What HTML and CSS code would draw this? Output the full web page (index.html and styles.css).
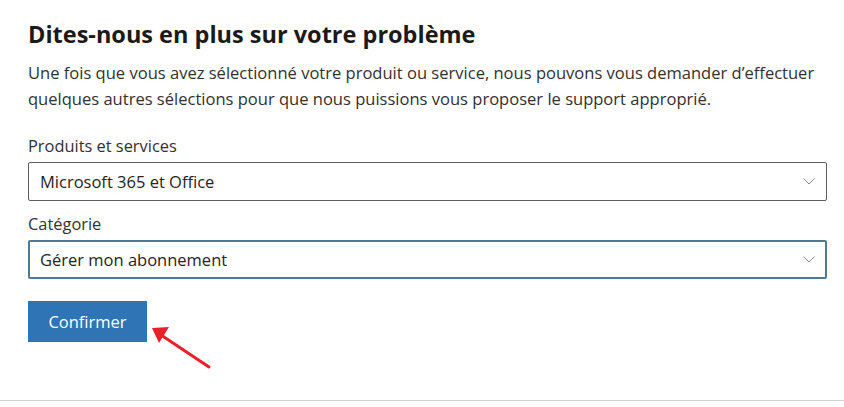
FILE: index.html
```html
<!DOCTYPE html>
<html lang="fr">
<head>
<meta charset="utf-8">
<title>Dites-nous en plus sur votre problème</title>
<link rel="stylesheet" href="styles.css">
</head>
<body>
<div class="page">
  <div class="content">
    <h1 class="title">Dites-nous en plus sur votre problème</h1>
    <p class="intro">Une fois que vous avez sélectionné votre produit ou service, nous pouvons vous demander d’effectuer quelques autres sélections pour que nous puissions vous proposer le support approprié.</p>
    <div class="field first">
      <label class="label">Produits et services</label>
      <div class="select">
        <span class="value">Microsoft 365 et Office</span>
        <svg class="chev" width="12" height="7" viewBox="0 0 12 7"><polyline points="0.5,0.5 6,6 11.5,0.5" fill="none" stroke="#8a8886" stroke-width="1"/></svg>
      </div>
    </div>
    <div class="field">
      <label class="label">Catégorie</label>
      <div class="select focused">
        <span class="value">Gérer mon abonnement</span>
        <svg class="chev" width="12" height="7" viewBox="0 0 12 7"><polyline points="0.5,0.5 6,6 11.5,0.5" fill="none" stroke="#8a8886" stroke-width="1"/></svg>
      </div>
    </div>
    <div class="actions">
      <button class="btn">Confirmer</button>
      <svg class="arrow" width="70" height="50" viewBox="0 0 70 50">
        <line x1="8" y1="7" x2="59" y2="41" stroke="#e8202a" stroke-width="3" stroke-linecap="round"/>
        <polygon points="2,2 19,1 9,17" fill="#e8202a"/>
      </svg>
    </div>
  </div>
</div>
</body>
</html>
```
FILE: styles.css
```css
* { box-sizing: border-box; }
html, body { margin: 0; padding: 0; background: #ffffff; }
body { font-family: "Open Sans", "Noto Sans", sans-serif; color: #323130; }
.page {
  height: 401px;
  border-bottom: 1px solid #d2d2d2;
}
.content {
  width: 827px;
  padding: 18px 0 0 28px;
  display: flex;
  flex-direction: column;
}
.title {
  margin: 0;
  font-size: 23.5px;
  line-height: 32px;
  font-weight: 700;
  color: #1b1a19;
}
.intro {
  margin: 10px 0 0 0;
  font-size: 16.55px;
  line-height: 26px;
  color: #323130;
}
.field { display: flex; flex-direction: column; gap: 5px; margin-top: 12px; }
.field.first { margin-top: 23px; }
.label { font-size: 16.4px; line-height: 22px; }
.select {
  height: 39px;
  border: 1px solid #605e5c;
  border-radius: 2px;
  display: flex;
  align-items: center;
  justify-content: space-between;
  padding: 0 11px 0 11px;
}
.select.focused { border: 2px solid #4f7a93; padding: 0 10px 0 10px; }
.value { font-size: 16.5px; line-height: 22px; color: #252423; }
.chev { display: block; }
.actions { position: relative; margin-top: 22px; }
.btn {
  width: 119px;
  height: 41px;
  border: none;
  border-radius: 0;
  background: #2f75b5;
  color: #ffffff;
  font-family: "Open Sans", "Noto Sans", sans-serif;
  font-size: 16.5px;
  padding: 0;
}
.arrow { position: absolute; left: 122px; top: 25px; }
```
